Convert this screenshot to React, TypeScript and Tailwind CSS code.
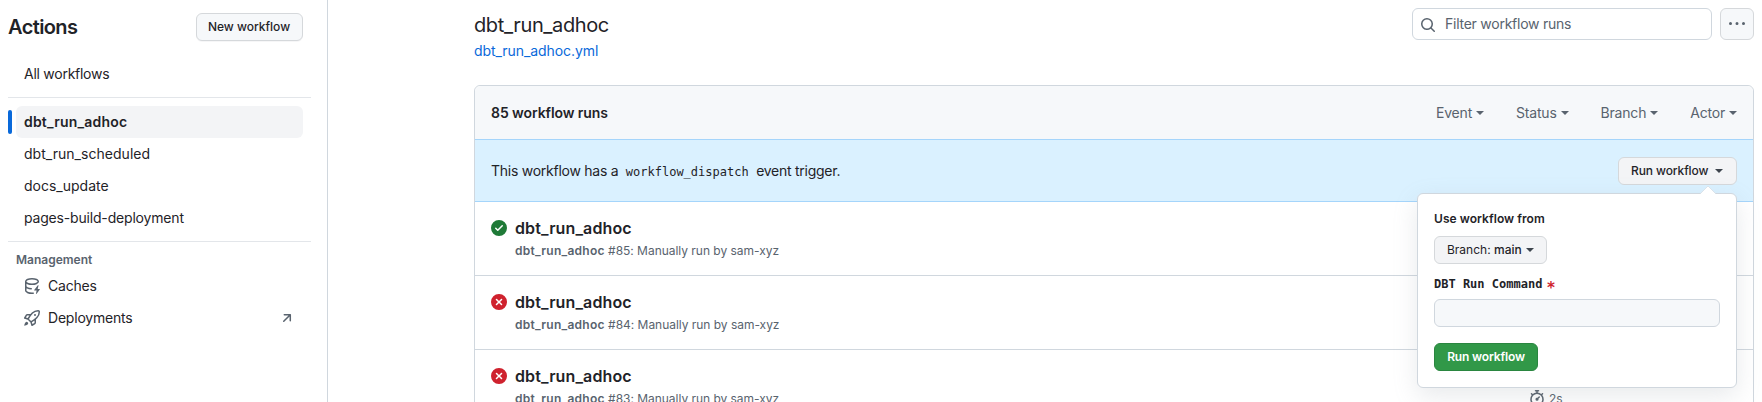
import React from "react";

const PATHS = {
  search:
    "M10.68 11.74a6 6 0 0 1-7.922-8.982 6 6 0 0 1 8.982 7.922l3.04 3.04a.749.749 0 0 1-.326 1.275.749.749 0 0 1-.734-.215ZM11.5 7a4.499 4.499 0 1 0-8.997 0A4.499 4.499 0 0 0 11.5 7Z",
  kebab:
    "M8 9a1.5 1.5 0 1 0 0-3 1.5 1.5 0 0 0 0 3ZM1.5 9a1.5 1.5 0 1 0 0-3 1.5 1.5 0 0 0 0 3Zm13 0a1.5 1.5 0 1 0 0-3 1.5 1.5 0 0 0 0 3Z",
  check:
    "M8 16A8 8 0 1 1 8 0a8 8 0 0 1 0 16Zm3.78-9.72a.751.751 0 0 0-.018-1.042.751.751 0 0 0-1.042-.018L6.75 9.19 5.28 7.72a.751.751 0 0 0-1.042.018.751.751 0 0 0-.018 1.042l2 2a.75.75 0 0 0 1.06 0Z",
  cross:
    "M2.343 13.657A8 8 0 1 1 13.658 2.343 8 8 0 0 1 2.343 13.657ZM6.03 4.97a.751.751 0 0 0-1.042.018.751.751 0 0 0-.018 1.042L6.94 8 4.97 9.97a.749.749 0 0 0 .326 1.275.749.749 0 0 0 .734-.215L8 9.06l1.97 1.97a.749.749 0 0 0 1.275-.326.749.749 0 0 0-.215-.734L9.06 8l1.97-1.97a.749.749 0 0 0-.326-1.275.749.749 0 0 0-.734.215L8 6.94Z",
  cache:
    "M2.5 5.724V8c0 .248.238.7 1.169 1.159.874.43 2.144.745 3.62.822a.75.75 0 1 1-.078 1.498c-1.622-.085-3.102-.432-4.204-.975a5.565 5.565 0 0 1-.507-.28V12.5c0 .133.058.318.282.551.227.237.591.483 1.101.707 1.015.447 2.47.742 4.117.742.406 0 .802-.018 1.183-.052a.751.751 0 1 1 .134 1.494C8.89 15.98 8.45 16 8 16c-1.805 0-3.475-.32-4.721-.869-.623-.274-1.173-.619-1.579-1.041-.408-.425-.7-.964-.7-1.59v-9c0-.626.292-1.165.7-1.591.406-.42.956-.766 1.579-1.04C4.525.32 6.195 0 8 0c1.806 0 3.476.32 4.721.869.623.274 1.173.619 1.579 1.041.408.425.7.964.7 1.59 0 .626-.292 1.165-.7 1.591-.406.42-.956.766-1.578 1.04C11.475 6.68 9.805 7 8 7c-1.805 0-3.475-.32-4.721-.869a6.15 6.15 0 0 1-.779-.407Zm0-2.224c0 .133.058.318.282.551.227.237.591.483 1.101.707C4.898 5.205 6.353 5.5 8 5.5c1.646 0 3.101-.295 4.118-.742.508-.224.873-.471 1.1-.708.224-.232.282-.417.282-.55 0-.133-.058-.318-.282-.551-.227-.237-.591-.483-1.101-.707C11.102 1.795 9.647 1.5 8 1.5c-1.646 0-3.101.295-4.118.742-.508.224-.873.471-1.1.708-.224.232-.282.417-.282.55Z M14.49 7.582a.375.375 0 0 0-.66-.313l-3.625 4.625a.375.375 0 0 0 .295.606h2.127l-.619 2.922a.375.375 0 0 0 .666.304l3.125-4.125A.375.375 0 0 0 15.5 11h-1.778l.769-3.418Z",
  rocket:
    "M14.064 0h.186C15.216 0 16 .784 16 1.75v.186a8.752 8.752 0 0 1-2.564 6.186l-.458.459c-.314.314-.641.616-.979.904v3.207c0 .608-.315 1.172-.833 1.49l-2.774 1.707a.749.749 0 0 1-1.11-.418l-.954-3.102a1.214 1.214 0 0 1-.145-.125L3.754 9.816a1.218 1.218 0 0 1-.124-.145L.528 8.717a.749.749 0 0 1-.418-1.11l1.71-2.774A1.748 1.748 0 0 1 3.31 4h3.204c.288-.338.59-.665.904-.979l.459-.458A8.749 8.749 0 0 1 14.064 0ZM8.938 3.623h-.002l-.458.458c-.76.76-1.437 1.598-2.02 2.5l-1.5 2.317 2.143 2.143 2.317-1.5c.902-.583 1.74-1.26 2.499-2.02l.459-.458a7.25 7.25 0 0 0 2.123-5.127V1.75a.25.25 0 0 0-.25-.25h-.186a7.249 7.249 0 0 0-5.125 2.123ZM3.56 14.56c-.732.732-2.334 1.045-3.005 1.148a.234.234 0 0 1-.201-.064.234.234 0 0 1-.064-.201c.103-.671.416-2.273 1.15-3.003a1.502 1.502 0 1 1 2.12 2.12Zm6.94-3.935c-.088.06-.177.118-.266.175l-2.35 1.521.548 1.783 1.949-1.2a.25.25 0 0 0 .119-.213ZM3.678 8.116 5.2 5.766c.058-.09.117-.178.176-.266H3.309a.25.25 0 0 0-.213.119l-1.2 1.95ZM12 5a1 1 0 1 1-2 0 1 1 0 0 1 2 0Z",
  arrow:
    "M4.53 4.75A.75.75 0 0 1 5.28 4h6.01a.75.75 0 0 1 .75.75v6.01a.75.75 0 0 1-1.5 0v-4.2l-5.26 5.261a.749.749 0 0 1-1.275-.326.749.749 0 0 1 .215-.734L9.48 5.5h-4.2a.75.75 0 0 1-.75-.75Z",
  stopwatch:
    "M5.75.75A.75.75 0 0 1 6.5 0h3a.75.75 0 0 1 0 1.5h-.75v1l-.001.041a6.724 6.724 0 0 1 3.464 1.435l.007-.006.75-.75a.749.749 0 0 1 1.275.326.749.749 0 0 1-.215.734l-.75.75-.006.007a6.75 6.75 0 1 1-10.548 0L2.72 5.03l-.75-.75a.751.751 0 0 1 .018-1.042.751.751 0 0 1 1.042-.018l.75.75.007.006A6.72 6.72 0 0 1 7.25 2.541V1.5H6.5a.75.75 0 0 1-.75-.75ZM8 14.5a5.25 5.25 0 1 0-.001-10.501A5.25 5.25 0 0 0 8 14.5Zm.389-6.7 1.33-1.33a.75.75 0 1 1 1.061 1.06L9.45 8.861A1.503 1.503 0 0 1 8 10.75a1.499 1.499 0 1 1 .389-2.95Z",
};

function Icon({ name, className = "" }: { name: keyof typeof PATHS; className?: string }) {
  return (
    <svg viewBox="0 0 16 16" width="16" height="16" fill="currentColor" className={`shrink-0 ${className}`}>
      <path d={PATHS[name]} />
    </svg>
  );
}

function Caret({ className = "" }: { className?: string }) {
  return (
    <svg viewBox="0 0 8 4" width="8" height="4" fill="currentColor" className={`shrink-0 ${className}`}>
      <path d="M0 0h8L4 4Z" />
    </svg>
  );
}

function NavItem({ label, className = "" }: { label: string; className?: string }) {
  return <li className={`flex h-8 items-center pl-6 ${className}`}>{label}</li>;
}

function Sidebar() {
  return (
    <aside className="h-full w-[328px] shrink-0 border-r border-[#d0d7de] pl-2">
      <div className="flex items-center justify-between pt-[13px] pr-6">
        <h2 className="text-[20px] leading-7 font-semibold tracking-[-0.6px]">Actions</h2>
        <button className="h-7 w-[107px] rounded-md border border-[#d5d8db] bg-[#f6f8fa] pr-px text-xs font-medium shadow-[0_1px_0_rgba(31,35,40,0.04)]">
          New workflow
        </button>
      </div>
      <ul className="mt-[17px] -ml-2">
        <NavItem label="All workflows" className="tracking-[-0.26px]" />
      </ul>
      <hr className="mt-[7px] mr-4 border-[#e3e6ea]" />
      <ul className="mt-2 -ml-2">
        <li className="flex h-8 items-center pl-2">
          <span className="h-6 w-1 rounded-md bg-[#0969da]" />
          <span className="ml-1 flex h-8 w-[287px] items-center rounded-md bg-[#f3f4f6] pl-2 font-semibold tracking-[0.2px]">
            dbt_run_adhoc
          </span>
        </li>
        <NavItem label="dbt_run_scheduled" className="tracking-[0.03px]" />
        <NavItem label="docs_update" />
        <NavItem label="pages-build-deployment" className="tracking-[-0.18px]" />
      </ul>
      <hr className="mt-[7px] mr-4 border-[#e3e6ea]" />
      <h3 className="mt-[9px] pl-2 text-xs leading-[18px] font-semibold text-[#59636e]">Management</h3>
      <ul className="mt-px">
        <li className="flex h-8 items-center gap-2 pl-4 tracking-[-0.2px]">
          <Icon name="cache" className="text-[#59636e]" />
          Caches
        </li>
        <li className="flex h-8 items-center gap-2 pr-8 pl-4 tracking-[-0.2px]">
          <Icon name="rocket" className="text-[#59636e]" />
          <span className="grow">Deployments</span>
          <Icon name="arrow" className="text-[#59636e]" />
        </li>
      </ul>
    </aside>
  );
}

function Popover() {
  return (
    <div className="absolute top-9 right-0 h-[195px] w-80 rounded-md border border-[#d0d7de] bg-white px-4 pt-4 shadow-[0_8px_24px_rgba(140,149,159,0.2)]">
      <svg viewBox="0 0 16 9" width="16" height="9" className="absolute -top-[8px] right-[20px]">
        <path d="M0 8 8 0l8 8v1H0Z" fill="#fff" />
        <path d="M0 8 8 0l8 8" fill="none" stroke="#d0d7de" strokeOpacity="0.6" />
      </svg>
      <p className="text-xs leading-[18px] font-semibold tracking-[0.06px]">Use workflow from</p>
      <button className="mt-2 flex h-7 w-[113px] items-center rounded-md border border-[#d5d8db] bg-[#f3f4f6] pl-3 text-xs whitespace-pre">
        Branch: <span className="font-medium">main</span>
        <Caret className="ml-1 text-[#3d444d]" />
      </button>
      <label className="mt-[11px] flex h-[18px] font-['DejaVu_Sans_Mono',monospace] text-xs leading-[18px] font-bold">
        DBT Run Command
        <span className="ml-[4px] pt-1 text-[15px] leading-[18px] text-[#cf222e]">*</span>
      </label>
      <input className="mt-1.5 block h-7 w-[286px] rounded-md border border-[#d0d7de] bg-[#f6f8fa]" />
      <button className="mt-4 block h-7 w-[104px] rounded-md border border-[#2a8640] bg-[#319848] text-xs font-semibold tracking-[-0.15px] text-white">
        Run workflow
      </button>
    </div>
  );
}

const RUNS = [
  { id: 85, ok: true },
  { id: 84, ok: false },
  { id: 83, ok: false },
];

function RunRow({ id, ok }: { id: number; ok: boolean }) {
  return (
    <li className="flex h-[74px] border-b border-[#d0d7de] pt-4 pl-4">
      <Icon name={ok ? "check" : "cross"} className={ok ? "mt-0.5 text-[#1f7a37]" : "mt-0.5 text-[#cf222e]"} />
      <div className="ml-2">
        <p className="text-base leading-5 font-semibold tracking-[0.12px]">dbt_run_adhoc</p>
        <p className="mt-1 text-xs leading-[18px] tracking-[-0.03px] text-[#59636e]">
          <span className="font-semibold tracking-[0.26px]">dbt_run_adhoc</span> #{id}: Manually run by sam-xyz
        </p>
      </div>
      <div className="ml-auto flex w-[224px] items-start gap-1 pt-6 text-xs leading-[18px] text-[#59636e]">
        <Icon name="stopwatch" />
        <span>2s</span>
      </div>
    </li>
  );
}

export default function App() {
  return (
    <div className="flex h-[402px] w-[1762px] overflow-hidden bg-white font-[Inter,sans-serif] text-sm leading-5 text-[#1f2328]">
      <Sidebar />
      <main className="ml-[146px] flex w-[1280px] flex-col">
        <header className="flex h-[85px] shrink-0 items-start">
          <div className="pt-[10px]">
            <h1 className="text-[20px] leading-[30px] tracking-[-0.38px]">dbt_run_adhoc</h1>
            <a className="mt-px block tracking-[-0.07px] text-[#0969da]">dbt_run_adhoc.yml</a>
          </div>
          <div className="mt-2 ml-auto flex h-8 w-[300px] items-center gap-2 rounded-md border border-[#d0d7de] pl-[7px] tracking-[-0.25px] text-[#59636e]">
            <Icon name="search" className="mt-px text-[#59636e]" />
            <span className="ml-px">Filter workflow runs</span>
          </div>
          <button className="mt-2 ml-2 flex h-8 w-[34px] items-center justify-center rounded-md border border-[#d5d8db] bg-[#f6f8fa] text-[#59636e]">
            <Icon name="kebab" />
          </button>
        </header>
        <section className="h-[420px] shrink-0 rounded-md border border-[#d0d7de]">
          <div className="flex h-[53px] items-center rounded-t-md bg-[#f6f8fa] px-4">
            <span className="font-semibold tracking-[-0.08px]">85 workflow runs</span>
            <div className="ml-auto flex gap-8 tracking-[-0.2px] text-[#59636e]">
              {["Event", "Status", "Branch", "Actor"].map((f) => (
                <span key={f} className="flex items-center gap-1">
                  {f}
                  <Caret />
                </span>
              ))}
            </div>
          </div>
          <div className="flex h-[63px] items-start justify-between border-y border-[#a5d5fb] bg-[#daf1ff] px-4 pt-[17px]">
            <p className="mt-1 flex tracking-[-0.26px]">
              This workflow has a
              <code className="px-[7.5px] pt-px font-['DejaVu_Sans_Mono',monospace] text-xs leading-5 tracking-normal">
                workflow_dispatch
              </code>
              event trigger.
            </p>
            <div className="relative z-10">
              <button className="flex h-7 w-[119px] items-center rounded-md border border-[#d5d8db] bg-[#f3f4f6] pl-3 text-xs font-medium tracking-[-0.1px]">
                Run workflow
                <Caret className="ml-[7px] text-[#3d444d]" />
              </button>
              <Popover />
            </div>
          </div>
          <ul>
            {RUNS.map((r) => (
              <RunRow key={r.id} {...r} />
            ))}
          </ul>
        </section>
      </main>
    </div>
  );
}
